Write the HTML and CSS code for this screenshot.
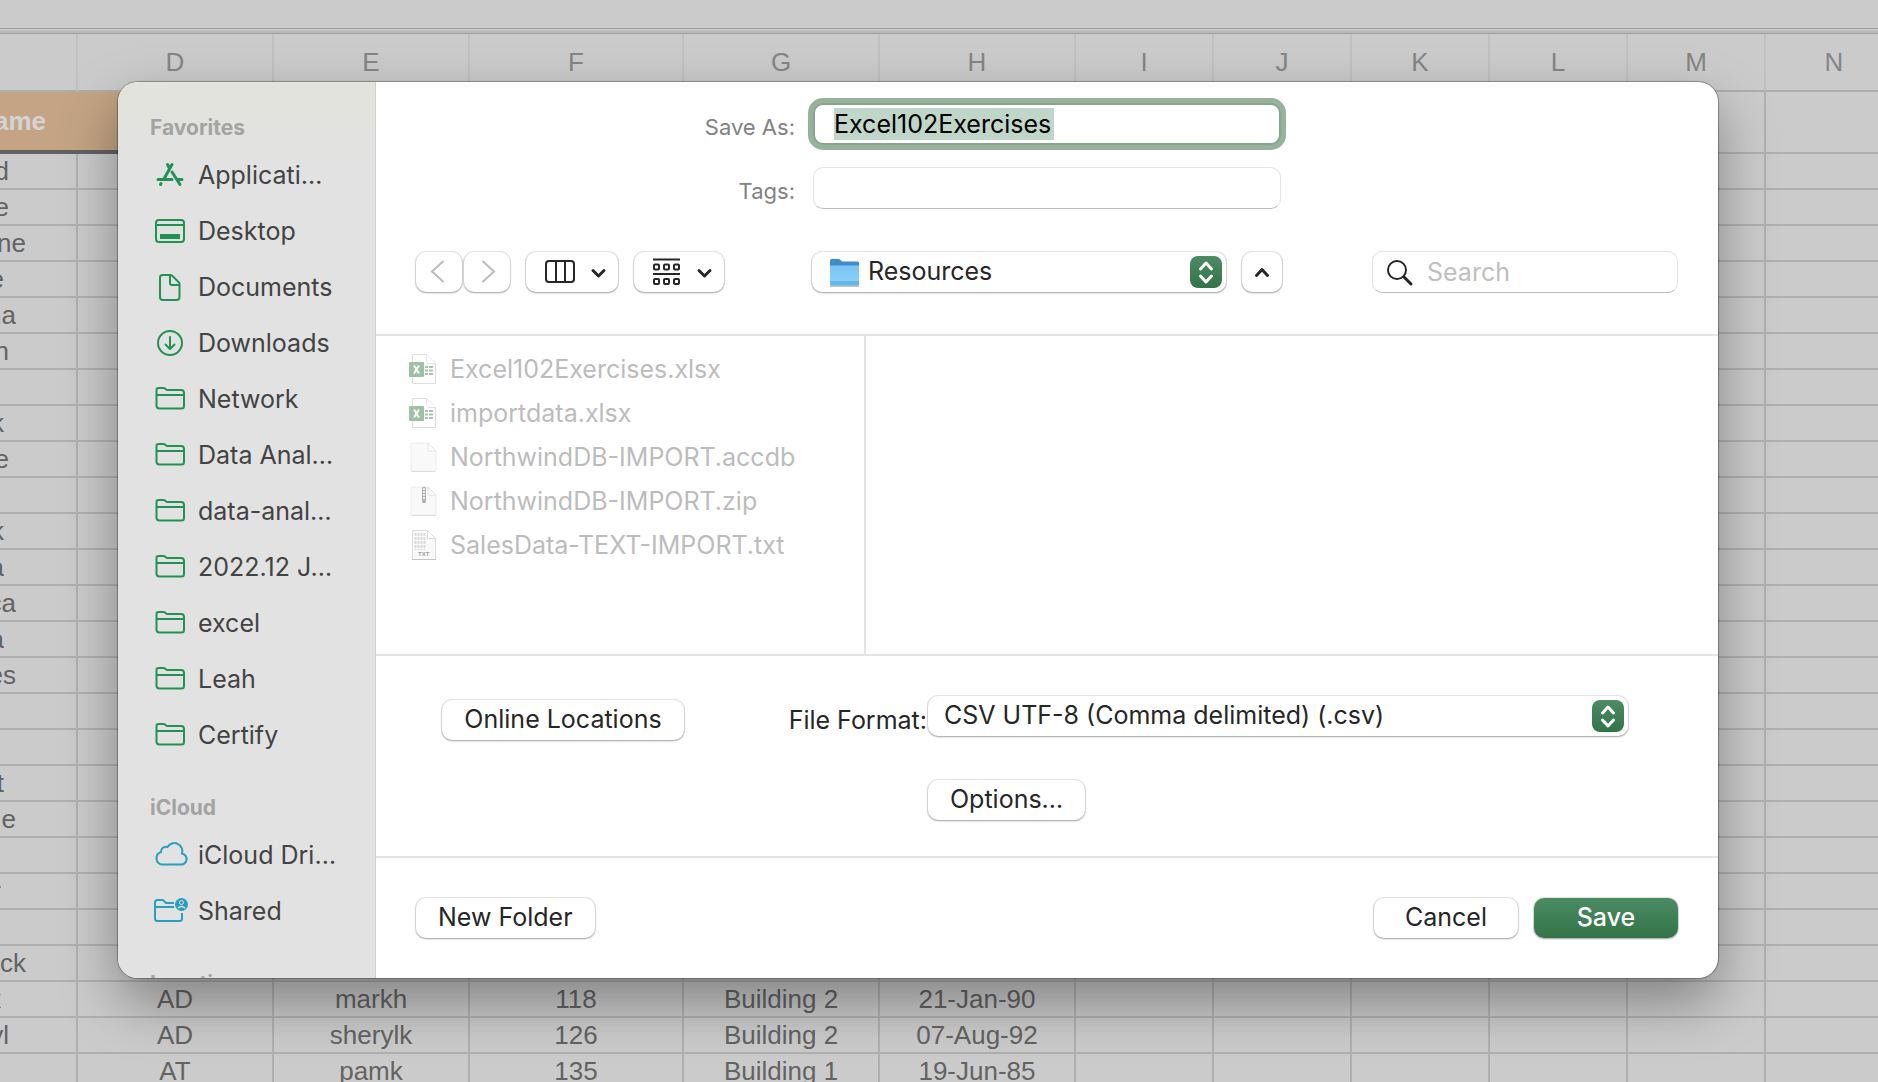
FILE: index.html
```html
<!DOCTYPE html>
<html lang="en">
<head>
<meta charset="utf-8">
<title>Save As</title>
<link rel="stylesheet" href="styles.css">
</head>
<body>
<svg class="sprite" aria-hidden="true">
  <symbol id="folder" viewBox="0 0 34 32"><path d="M2.5 9V7q0-2 2-2h5q1 0 2 1l1.500 1h14q3 0 3 3v13q0 2.500-2.500 2.500h-22q-3 0-3-3zM2.500 12h27.500" fill="none" stroke="currentColor" stroke-width="2"/></symbol>
  <symbol id="stepper" viewBox="0 0 32 32"><path d="M10.500 13l5.500-6 5.500 6M10.500 20l5.500 6 5.500-6" fill="none" stroke="#fff" stroke-width="3" stroke-linecap="round" stroke-linejoin="round"/></symbol>
  <symbol id="excel" viewBox="0 0 32 32">
    <path d="M6.500 1.500h14l9 8.500v20.500h-23z" fill="#fff" stroke="#dedede"/><path d="M20.500 1.500q-1 8 2 9h7" fill="#fff" stroke="#e2e2e2"/>
    <path d="M19 13h3v2h-3zm4 0h4v2h-4zm-4 3.500h3v2h-3zm4 0h4v2h-4zm-4 3.500h3v2h-3zm4 0h4v2h-4z" fill="#a4c4ac"/>
    <rect x="3" y="9" width="15" height="15" rx="1" fill="#9dc0a7"/><path d="M8 12.500l5 8M13 12.500l-5 8" stroke="#fff" stroke-width="2"/>
  </symbol>
  <symbol id="page" viewBox="0 0 32 32"><path d="M6 2h16l8 8v19q0 1-1 1H6q-1 0-1-1V3q0-1 1-1z" fill="#f9f9f9" stroke="#ececec"/><path d="M22 2v7q0 1 1 1h7z" fill="#fff" stroke="#e2e2e2"/><path d="M5.500 30.500h24" stroke="#dcdcdc"/></symbol>
</svg>

<main class="workbook">
  <div class="ribbon-edge"></div>
  <table class="sheet">
    <colgroup><col class="w-edge"><col class="w-mid"><col class="w-mid"><col class="w-wide"><col class="w-mid"><col class="w-mid"><col class="w-std"><col class="w-std"><col class="w-std"><col class="w-std"><col class="w-std"><col class="w-std"></colgroup>
    <thead><tr><th></th><th>D</th><th>E</th><th>F</th><th>G</th><th>H</th><th>I</th><th>J</th><th>K</th><th>L</th><th>M</th><th>N</th></tr></thead>
    <tbody>
      <tr class="titles"><td class="band"><span class="cut cut-title">ame</span></td><td class="band"></td><td class="band"></td><td class="band"></td><td class="band"></td><td class="band"></td><td></td><td></td><td></td><td></td><td></td><td></td></tr>
      <tr><td><span class="cut cut-m">d</span></td><td></td><td></td><td></td><td></td><td></td><td></td><td></td><td></td><td></td><td></td><td></td></tr>
      <tr><td><span class="cut cut-m">e</span></td><td></td><td></td><td></td><td></td><td></td><td></td><td></td><td></td><td></td><td></td><td></td></tr>
      <tr><td><span class="cut cut-xl">ne</span></td><td></td><td></td><td></td><td></td><td></td><td></td><td></td><td></td><td></td><td></td><td></td></tr>
      <tr><td><span class="cut cut-s">e</span></td><td></td><td></td><td></td><td></td><td></td><td></td><td></td><td></td><td></td><td></td><td></td></tr>
      <tr><td><span class="cut cut-l">na</span></td><td></td><td></td><td></td><td></td><td></td><td></td><td></td><td></td><td></td><td></td><td></td></tr>
      <tr><td><span class="cut cut-m">n</span></td><td></td><td></td><td></td><td></td><td></td><td></td><td></td><td></td><td></td><td></td><td></td></tr>
      <tr><td></td><td></td><td></td><td></td><td></td><td></td><td></td><td></td><td></td><td></td><td></td><td></td></tr>
      <tr><td><span class="cut cut-s">k</span></td><td></td><td></td><td></td><td></td><td></td><td></td><td></td><td></td><td></td><td></td><td></td></tr>
      <tr><td><span class="cut cut-m">e</span></td><td></td><td></td><td></td><td></td><td></td><td></td><td></td><td></td><td></td><td></td><td></td></tr>
      <tr><td></td><td></td><td></td><td></td><td></td><td></td><td></td><td></td><td></td><td></td><td></td><td></td></tr>
      <tr><td><span class="cut cut-s">k</span></td><td></td><td></td><td></td><td></td><td></td><td></td><td></td><td></td><td></td><td></td><td></td></tr>
      <tr><td><span class="cut cut-s">a</span></td><td></td><td></td><td></td><td></td><td></td><td></td><td></td><td></td><td></td><td></td><td></td></tr>
      <tr><td><span class="cut cut-l">ca</span></td><td></td><td></td><td></td><td></td><td></td><td></td><td></td><td></td><td></td><td></td><td></td></tr>
      <tr><td><span class="cut cut-s">a</span></td><td></td><td></td><td></td><td></td><td></td><td></td><td></td><td></td><td></td><td></td><td></td></tr>
      <tr><td><span class="cut cut-l">es</span></td><td></td><td></td><td></td><td></td><td></td><td></td><td></td><td></td><td></td><td></td><td></td></tr>
      <tr><td></td><td></td><td></td><td></td><td></td><td></td><td></td><td></td><td></td><td></td><td></td><td></td></tr>
      <tr><td></td><td></td><td></td><td></td><td></td><td></td><td></td><td></td><td></td><td></td><td></td><td></td></tr>
      <tr><td><span class="cut cut-s">t</span></td><td></td><td></td><td></td><td></td><td></td><td></td><td></td><td></td><td></td><td></td><td></td></tr>
      <tr><td><span class="cut cut-l">e</span></td><td></td><td></td><td></td><td></td><td></td><td></td><td></td><td></td><td></td><td></td><td></td></tr>
      <tr><td></td><td></td><td></td><td></td><td></td><td></td><td></td><td></td><td></td><td></td><td></td><td></td></tr>
      <tr><td><span class="cut cut-xs">r</span></td><td></td><td></td><td></td><td></td><td></td><td></td><td></td><td></td><td></td><td></td><td></td></tr>
      <tr><td></td><td></td><td></td><td></td><td></td><td></td><td></td><td></td><td></td><td></td><td></td><td></td></tr>
      <tr><td><span class="cut cut-xl">ck</span></td><td></td><td></td><td></td><td></td><td></td><td></td><td></td><td></td><td></td><td></td><td></td></tr>
      <tr><td><span class="cut cut-xs">k</span></td><td>AD</td><td>markh</td><td>118</td><td>Building 2</td><td>21-Jan-90</td><td></td><td></td><td></td><td></td><td></td><td></td></tr>
      <tr><td><span class="cut cut-m">yl</span></td><td>AD</td><td>sherylk</td><td>126</td><td>Building 2</td><td>07-Aug-92</td><td></td><td></td><td></td><td></td><td></td><td></td></tr>
      <tr><td></td><td>AT</td><td>pamk</td><td>135</td><td>Building 1</td><td>19-Jun-85</td><td></td><td></td><td></td><td></td><td></td><td></td></tr>
    </tbody>
  </table>
</main>

<form class="dialog" role="dialog" aria-label="Save As">
  <nav class="sidebar">
    <h2>Favorites</h2>
    <ul>
      <li><a href="#"><svg viewBox="0 0 34 32" fill="none" stroke="currentColor" stroke-width="3" stroke-linecap="round"><path d="M18 5.500L10.500 19M13.500 5.500l1.500 3M18 13l8 12.500M4 20.500h14M23.500 20.500h4.500M7 24.500l-.500 1"/></svg>Applicati…</a></li>
      <li><a href="#"><svg viewBox="0 0 34 32" fill="none" stroke="currentColor" stroke-width="2"><rect x="2" y="5" width="28" height="22" rx="3"/><path d="M2 10h28"/><rect x="7" y="20" width="18" height="3" fill="currentColor"/></svg>Desktop</a></li>
      <li><a href="#"><svg viewBox="0 0 34 32" fill="none" stroke="currentColor" stroke-width="2" stroke-linejoin="round"><path d="M8.500 4h8q1 0 2 1l6.500 6.500q.500.500.500 2V26q0 3-3 3H9q-3 0-3-3V6.500Q6 4 8.500 4zM16 4v8q0 2 2 2h7.500"/></svg>Documents</a></li>
      <li><a href="#"><svg viewBox="0 0 34 32" fill="none" stroke="currentColor" stroke-width="2" stroke-linecap="round" stroke-linejoin="round"><circle cx="16" cy="16" r="12"/><path d="M16 10v12M11.500 17.500L16 22l4.500-4.500"/></svg>Downloads</a></li>
      <li><a href="#"><svg><use href="#folder"/></svg>Network</a></li>
      <li><a href="#"><svg><use href="#folder"/></svg>Data Anal…</a></li>
      <li><a href="#"><svg><use href="#folder"/></svg>data-anal…</a></li>
      <li><a href="#"><svg><use href="#folder"/></svg>2022.12 J…</a></li>
      <li><a href="#"><svg><use href="#folder"/></svg>excel</a></li>
      <li><a href="#"><svg><use href="#folder"/></svg>Leah</a></li>
      <li><a href="#"><svg><use href="#folder"/></svg>Certify</a></li>
    </ul>
    <h2>iCloud</h2>
    <ul class="cloud">
      <li><a href="#"><svg viewBox="0 0 34 32" fill="none" stroke="currentColor" stroke-width="2"><path d="M7.500 25.500h18.500a5.500 5.500 0 0 0 2-11 8 8 0 0 0-14.500-6.500 5 5 0 0 0-6.500 5 6.500 6.500 0 0 0 .500 12.500z"/></svg>iCloud Dri…</a></li>
      <li><a href="#"><svg viewBox="0 0 34 32"><path d="M20 8h-8l-2-2q-1-1-2-1H3.500Q1 5 1 7.500v16q0 2.500 2.500 2.500h22q2.500 0 2.500-2.500V18M1 12h19" fill="none" stroke="currentColor" stroke-width="2"/><circle cx="27.500" cy="9.500" r="6.500" fill="currentColor"/><circle cx="27.500" cy="7.500" r="2" fill="none" stroke="#e2e2e2"/><path d="M24 13q3.500-3 7 0" fill="none" stroke="#e2e2e2" stroke-width="1.500"/></svg>Shared</a></li>
    </ul>
    <h2>Locations</h2>
  </nav>

  <div class="panel">
    <section class="naming">
      <label for="filename">Save As:</label>
      <input class="field focused" id="filename" type="text" value="Excel102Exercises">
      <label for="tags">Tags:</label>
      <input class="field" id="tags" type="text">
    </section>

    <section class="toolbar">
      <div class="views">
        <div class="history">
          <button type="button" class="btn" aria-label="Back"><svg width="46" height="40" viewBox="0 0 46 40" fill="none" stroke="#bcbcbc" stroke-width="2" stroke-linecap="round"><path d="M27 9.500L16 19.500l11 10"/></svg></button>
          <button type="button" class="btn" aria-label="Forward"><svg width="46" height="40" viewBox="0 0 46 40" fill="none" stroke="#bcbcbc" stroke-width="2" stroke-linecap="round"><path d="M19 9.500l11 10-11 10"/></svg></button>
        </div>
        <button type="button" class="btn" aria-label="Column view"><svg width="92" height="40" viewBox="0 0 92 40" fill="none" stroke="#262626" stroke-width="2"><rect x="20" y="9" width="28" height="21" rx="3"/><path d="M30 9v21M39 9v21"/><path d="M67 18.500l5.500 5.500 5.500-5.500" stroke-width="3" stroke-linecap="round" stroke-linejoin="round"/></svg></button>
        <button type="button" class="btn" aria-label="Group by"><svg width="90" height="40" viewBox="0 0 90 40" fill="none" stroke="#262626" stroke-width="2"><path d="M19 7.500h27M19 22h27"/><g><rect x="20" y="12.500" width="5" height="5" rx="1"/><rect x="30" y="12.500" width="5" height="5" rx="1"/><rect x="40" y="12.500" width="5" height="5" rx="1"/><rect x="20" y="27" width="5" height="5" rx="1"/><rect x="30" y="27" width="5" height="5" rx="1"/><rect x="40" y="27" width="5" height="5" rx="1"/></g><path d="M65 18.500l5.500 5.500 5.500-5.500" stroke-width="3" stroke-linecap="round" stroke-linejoin="round"/></svg></button>
      </div>
      <div class="location">
        <div class="popup">
          <select class="with-icon" aria-label="Folder"><option>Resources</option></select>
          <svg class="folder-icon" viewBox="0 0 32 32"><defs><linearGradient id="blue" x2="0" y2="1"><stop offset="0" stop-color="#7cc6f5"/><stop offset="1" stop-color="#8ad2fa"/></linearGradient></defs><path d="M2 29h29" stroke="#c4c4c4" stroke-width="2"/><path d="M2 3.500Q2 2 3.500 2h7q1 0 2 1l1.500 1.500h15.500Q31 4.500 31 6v7H2z" fill="#3f8dcc"/><path d="M2 8.500h29V27q0 1.500-1.500 1.500h-26Q2 28.500 2 27z" fill="url(#blue)"/><path d="M2 24h29v3q0 1.500-1.500 1.500h-26Q2 28.500 2 27z" fill="#68b7e6"/></svg>
          <svg class="stepper"><use href="#stepper"/></svg>
        </div>
        <button type="button" class="btn" aria-label="Collapse"><svg width="40" height="40" viewBox="0 0 40 40" fill="none" stroke="#262626" stroke-width="3" stroke-linecap="round" stroke-linejoin="round"><path d="M14.500 23.500l5.500-6 5.500 6"/></svg></button>
      </div>
      <div class="search">
        <svg viewBox="0 0 32 32" fill="none" stroke="#262626" stroke-linecap="round"><circle cx="13" cy="14" r="9" stroke-width="2"/><path d="M20 21l7 7" stroke-width="3"/></svg>
        <input class="field" type="search" placeholder="Search" aria-label="Search">
      </div>
    </section>

    <section class="browser">
      <ul class="files">
        <li><svg><use href="#excel"/></svg>Excel102Exercises.xlsx</li>
        <li><svg><use href="#excel"/></svg>importdata.xlsx</li>
        <li><svg><use href="#page"/></svg>NorthwindDB-IMPORT.accdb</li>
        <li><svg viewBox="0 0 32 32"><use href="#page"/><rect x="16" y="2" width="4" height="16" rx="1" fill="#b4b4b4"/><path d="M18 3v11" stroke="#e9e9e9" stroke-width="2" stroke-dasharray="2 1"/></svg>NorthwindDB-IMPORT.zip</li>
        <li><svg viewBox="0 0 32 32"><path d="M6.500 1.500h15l8 8v21h-23z" fill="#f9f9f9" stroke="#dcdcdc"/><path d="M21.500 1.500v8h8z" fill="#fff" stroke="#dcdcdc"/><path d="M9.500 4v17M12.500 4v17M15.500 4v17M18.500 4v17" stroke="#dadada" stroke-width="2" stroke-dasharray="3 1"/><path d="M6 30.500h24" stroke="#c4c4c4"/><text x="12" y="27" class="tiny">TXT</text></svg>SalesData-TEXT-IMPORT.txt</li>
      </ul>
    </section>

    <section class="format">
      <button type="button" class="btn shifted">Online Locations</button>
      <label for="format">File Format:</label>
      <div class="choices">
        <div class="popup">
          <select id="format"><option>CSV UTF-8 (Comma delimited) (.csv)</option></select>
          <svg class="stepper"><use href="#stepper"/></svg>
        </div>
        <button type="button" class="btn">Options…</button>
      </div>
    </section>

    <footer class="actions">
      <button type="button" class="btn">New Folder</button>
      <span class="confirm">
        <button type="button" class="btn">Cancel</button>
        <button type="submit" class="btn primary">Save</button>
      </span>
    </footer>
  </div>
</form>
</body>
</html>
```
FILE: styles.css
```css
* { box-sizing: border-box; }
body {
  margin: 0;
  height: 100vh;
  overflow: hidden;
  position: relative;
  background: #cbcbcb;
  font: 25px/32px Inter, "Liberation Sans", sans-serif;
  color: #262626;
}
.sprite { position: absolute; width: 0; height: 0; }
ul { list-style: none; margin: 0; padding: 0; }
button, input, select { font: inherit; color: inherit; }

/* Spreadsheet behind the dialog */
.workbook { height: 100%; overflow: hidden; }
.ribbon-edge {
  height: 34px;
  background: linear-gradient(#cbcbcb 28px, #a0a0a0 28px 29px, #c6c6c6 29px 31px, #b8b8b8 31px 33px, #a0a0a0 33px);
}
.sheet {
  width: 1904px;
  table-layout: fixed;
  border-collapse: separate;
  border-spacing: 0;
  font: 26px/34px "Liberation Sans", Arial, sans-serif;
  color: #636363;
  text-align: center;
}
.w-edge { width: 78px; }
.w-mid { width: 196px; }
.w-wide { width: 214px; }
.w-std { width: 138px; }
.sheet th {
  height: 58px;
  padding: 0;
  font-weight: 400;
  color: #858585;
  border-right: 2px solid #c0c0c0;
  border-bottom: 2px solid #aeaeae;
}
.sheet td {
  height: 36px;
  padding: 0;
  border-right: 2px solid #b0b0b0;
  border-bottom: 2px solid #b0b0b0;
}
.sheet .titles td { height: 62px; }
.sheet .titles .band {
  background: #c4a484;
  border-right: 0;
  border-bottom: 4px solid #606264;
}
.cut { display: flex; justify-content: flex-end; overflow: hidden; }
.cut-xs { width: 1px; }
.cut-s { width: 4px; }
.cut-m { width: 9px; }
.cut-l { width: 16px; }
.cut-xl { width: 26px; }
.cut-title { width: 46px; font-weight: 700; color: #d4d4d4; }

/* Dialog */
.dialog {
  position: absolute;
  top: 82px;
  left: 118px;
  right: 160px;
  display: grid;
  grid-template-columns: 258px 1fr;
  border-radius: 20px;
  overflow: hidden;
  background: #fff;
  box-shadow: 0 0 1px 1px rgba(0, 0, 0, .3), 0 24px 56px rgba(0, 0, 0, .36);
}
.sidebar {
  contain: size;
  overflow: hidden;
  padding-top: 1px;
  background: linear-gradient(#e2e3dc, #e2e2e2 80px);
  border-right: 1px solid #cfcfcf;
}
.sidebar h2 {
  margin: 31px 0 5px;
  padding-left: 32px;
  font-size: 21px;
  line-height: 28px;
  font-weight: 700;
  color: #a3a3a2;
}
.sidebar a {
  display: flex;
  align-items: center;
  gap: 10px;
  height: 56px;
  padding-left: 36px;
  color: #434343;
  text-decoration: none;
  white-space: nowrap;
}
.sidebar svg { width: 34px; height: 32px; flex: none; color: #1f9254; }
.sidebar .cloud svg { color: #27a0bd; }

.btn {
  height: 40px;
  padding: 0 22px 2px;
  border: 0;
  border-radius: 10px;
  background: #fff;
  white-space: nowrap;
  box-shadow: 0 0 1px 1px rgba(0, 0, 0, .1), 0 1px 2px rgba(0, 0, 0, .3);
}
.btn:has(svg) { padding: 0; }
.btn svg { display: block; }
.primary { background: linear-gradient(#4b8c65, #327347); color: #fff; font-weight: 500; }
.field {
  width: 100%;
  height: 42px;
  padding: 0 19px;
  border: 1px solid #e4e4e4;
  border-bottom-color: #bdbdbd;
  border-radius: 10px;
  background: #fff;
  outline: 0;
}
.focused {
  border: 2px solid #87a68d;
  color: #000;
  background: linear-gradient(#bfd6c8, #bfd6c8) 19px 3px / 220px 32px no-repeat #fff;
  box-shadow: 0 0 0 5px #97b29b;
}

.naming {
  display: grid;
  grid-template-columns: 1fr 468px 1fr;
  row-gap: 22px;
  padding-top: 21px;
}
.naming label {
  grid-column: 1;
  padding: 8px 18px 0 0;
  font-size: 22px;
  line-height: 32px;
  text-align: right;
  color: #828282;
}

.toolbar {
  display: grid;
  grid-template-columns: 1fr 470px 1fr;
  align-items: center;
  padding: 42px 40px 41px;
  border-bottom: 2px solid #e4e4e4;
}
.views, .location, .confirm { display: flex; gap: 16px; }
.history { display: flex; gap: 2px; }
.location .popup { flex: 1; }
.popup { position: relative; }
.popup select {
  display: block;
  width: 100%;
  height: 40px;
  padding: 0 48px 2px 16px;
  border: 0;
  border-radius: 10px;
  appearance: none;
  background: #fff;
  box-shadow: 0 0 1px 1px rgba(0, 0, 0, .1), 0 1px 2px rgba(0, 0, 0, .3);
}
.popup .with-icon { padding-left: 56px; }
.folder-icon { position: absolute; left: 16px; top: 5px; width: 32px; height: 32px; }
.stepper {
  position: absolute;
  right: 4px;
  top: 4px;
  width: 32px;
  height: 32px;
  border-radius: 8px;
  background: linear-gradient(#4b8c65, #327347);
  pointer-events: none;
}
.search { position: relative; justify-self: end; display: flex; width: 306px; }
.search svg { position: absolute; left: 12px; top: 5px; width: 32px; height: 32px; }
.search .field { padding-left: 54px; }
.search ::placeholder { color: #bfbfbf; opacity: 1; }

.browser { height: 320px; border-bottom: 2px solid #e4e4e4; }
.files {
  width: 490px;
  height: 100%;
  padding: 11px 0 0 30px;
  border-right: 2px solid #e4e4e4;
  color: #bcbcbc;
}
.files li { display: flex; align-items: center; gap: 12px; height: 44px; }
.files svg { width: 32px; height: 32px; flex: none; }
.tiny { font: 700 6px "Liberation Sans", sans-serif; fill: #a0a0a0; }

.format {
  display: grid;
  grid-template-columns: 242px 244px 1fr;
  align-items: start;
  padding: 40px 90px 36px 66px;
  border-bottom: 2px solid #e4e4e4;
}
.format label { padding: 8px 1px 0 0; text-align: right; }
.format > .btn { padding: 0 0 2px; }
.shifted { margin-top: 4px; }
.choices { display: grid; gap: 44px; justify-items: start; }
.choices .popup { width: 100%; }
.actions { display: flex; justify-content: space-between; padding: 40px; }
.confirm .btn { width: 144px; }
```
